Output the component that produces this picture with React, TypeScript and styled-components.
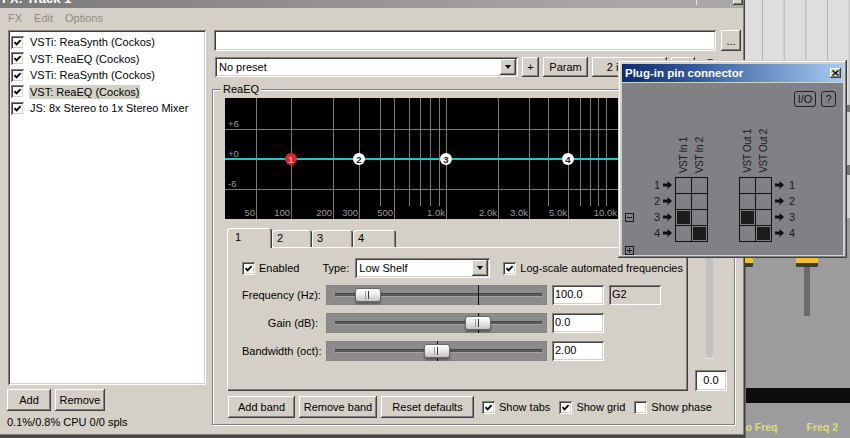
import React from 'react';
import styled, { createGlobalStyle, css } from 'styled-components';

// ── Global ───────────────────────────────────────────────────────────────────

const GlobalStyle = createGlobalStyle`
  html, body { margin: 0; padding: 0; }
  body {
    background: #4a4a4a;
    font-family: "Liberation Sans", Arial, sans-serif;
    font-size: 11px;
    color: #000;
    overflow: hidden;
  }
  * { box-sizing: border-box; }
`;

const raised = css`
  background: #d4d0c8;
  box-shadow: inset -1px -1px #404040, inset 1px 1px #ffffff,
    inset -2px -2px #808080, inset 2px 2px #d4d0c8;
`;

const sunken = css`
  box-shadow: inset 1px 1px #808080, inset -1px -1px #ffffff,
    inset 2px 2px #404040, inset -2px -2px #d4d0c8;
`;

// ── Data ─────────────────────────────────────────────────────────────────────

const fxChain = [
  { name: 'VSTi: ReaSynth (Cockos)' },
  { name: 'VST: ReaEQ (Cockos)' },
  { name: 'VSTi: ReaSynth (Cockos)' },
  { name: 'VST: ReaEQ (Cockos)', selected: true },
  { name: 'JS: 8x Stereo to 1x Stereo Mixer' },
];

const freqLines: { x: number; label?: string }[] = [
  { x: 31, label: '50' },
  { x: 66, label: '100' },
  { x: 108, label: '200' },
  { x: 134, label: '300' },
  { x: 155 },
  { x: 169, label: '500' },
  { x: 184 },
  { x: 195 },
  { x: 205 },
  { x: 214 },
  { x: 221, label: '1.0k' },
  { x: 273, label: '2.0k' },
  { x: 304, label: '3.0k' },
  { x: 323 },
  { x: 343, label: '5.0k' },
  { x: 355 },
  { x: 365 },
  { x: 373 },
  { x: 381 },
  { x: 393, label: '10.0k' },
  { x: 445, label: '20.0k' },
];

const gainLines = [
  { y: 31, label: '+6' },
  { y: 61, label: '+0' },
  { y: 91, label: '-6' },
];

const bandNodes = [
  { x: 66, n: 1, active: true },
  { x: 134, n: 2 },
  { x: 221, n: 3 },
  { x: 343, n: 4 },
];

const tabs = [
  { label: '1', w: 45, active: true },
  { label: '2', w: 40 },
  { label: '3', w: 41 },
  { label: '4', w: 43 },
];

const params = [
  { label: 'Frequency (Hz):', value: '100.0', thumb: 42, tick: 152, note: 'G2' },
  { label: 'Gain (dB):', value: '0.0', thumb: 152, tick: 152 },
  { label: 'Bandwidth (oct):', value: '2.00', thumb: 111, tick: 111 },
];

// which pins are routed: [row][col]
const inPins = [
  [false, false],
  [false, false],
  [true, false],
  [false, true],
];
const outPins = inPins;

// ── Layout ───────────────────────────────────────────────────────────────────

const Desktop = styled.div`
  position: relative;
  width: 850px;
  height: 438px;
  overflow: hidden;
  display: flex;
`;

const FxWindow = styled.div`
  flex: none;
  width: 745px;
  height: 436px;
  background: #d4d0c8;
  display: flex;
  flex-direction: column;
  box-shadow: inset -1px -1px #404040, inset -2px -2px #808080;
`;

const TitleBar = styled.div`
  flex: none;
  height: 20px;
  margin: -12px 2px 0 0;
  display: flex;
  align-items: center;
  padding-left: 2px;
  background: linear-gradient(90deg, #7a7a7a, #a9a9a9 85%);
  color: #fff;
  font-weight: bold;
  font-size: 13px;
`;

const TitleTools = styled.div`
  margin-left: auto;
  display: flex;
  align-items: center;
  gap: 32px;
`;

const TitleBtn = styled.span`
  width: 10px;
  height: 14px;
  ${raised};
`;

const MenuBar = styled.div`
  flex: none;
  height: 20px;
  display: flex;
  align-items: center;
  gap: 12px;
  padding-left: 8px;
  color: #8a8a8a;
`;

const Body = styled.div`
  flex: 1;
  min-height: 0;
  display: flex;
  gap: 6px;
  padding: 2px 4px 0 8px;
`;

const LeftCol = styled.div`
  flex: none;
  width: 198px;
  display: flex;
  flex-direction: column;
`;

const FxList = styled.div`
  height: 355px;
  background: #fff;
  ${sunken};
  padding: 4px 2px 2px 3px;
`;

const FxItem = styled.div`
  height: 16.5px;
  display: flex;
  align-items: center;
  gap: 5px;
`;

const FxName = styled.span<{ $selected?: boolean }>`
  padding: 1px 1px;
  background: ${p => (p.$selected ? '#d4d0c8' : 'transparent')};
  white-space: nowrap;
`;

const ButtonRow = styled.div`
  display: flex;
  align-items: center;
  gap: 4px;
`;

const LeftButtons = styled(ButtonRow)`
  margin: 4px 0 0 -1px;
`;

const Button = styled.button<{ $w: number; $h?: number }>`
  width: ${p => p.$w}px;
  height: ${p => p.$h ?? 22}px;
  flex: none;
  border: none;
  padding: 0;
  font: inherit;
  color: #000;
  white-space: nowrap;
  ${raised};
  display: inline-flex;
  align-items: center;
  justify-content: center;
`;

const Status = styled.div`
  margin: 5px 0 0 -1px;
  white-space: nowrap;
`;

const RightCol = styled.div`
  flex: 1;
  display: flex;
  flex-direction: column;
`;

const FieldRow = styled.div`
  height: 21px;
  display: flex;
  gap: 5px;
  padding-left: 2px;
`;

const TextField = styled.div`
  flex: 1;
  background: #fff;
  ${sunken};
`;

const PresetRow = styled.div`
  margin-top: 6px;
  height: 20px;
  display: flex;
  align-items: center;
  gap: 4px;
  padding-left: 3px;
`;

const Combo = styled.div<{ $w: number }>`
  width: ${p => p.$w}px;
  height: 20px;
  flex: none;
  background: #fff;
  ${sunken};
  padding: 2px;
  display: flex;
  align-items: center;
`;

const ComboText = styled.span`
  padding-left: 2px;
`;

const ComboArrow = styled.span`
  margin-left: auto;
  width: 16px;
  height: 16px;
  ${raised};
  display: flex;
  align-items: center;
  justify-content: center;
  &::after {
    content: '';
    border-left: 3.5px solid transparent;
    border-right: 3.5px solid transparent;
    border-top: 4px solid #000;
  }
`;

const RoundToggle = styled.span`
  width: 16px;
  height: 16px;
  margin-left: 3px;
  border: 1px solid #222;
  border-radius: 50%;
`;

const SquareToggle = styled.span`
  width: 13px;
  height: 13px;
  ${sunken};
  background: #fff;
`;

// ── ReaEQ group ──────────────────────────────────────────────────────────────

const Group = styled.div`
  position: relative;
  margin: 12px 6px 0 0;
  height: 336px;
  border: 1px solid #808080;
  box-shadow: inset 1px 1px #fff, 1px 1px #fff;
  padding: 8px 6px 0 12px;
`;

const GroupLabel = styled.span`
  position: absolute;
  top: -7px;
  left: 8px;
  padding: 0 2px;
  line-height: 13px;
  background: #d4d0c8;
`;

const GraphSvg = styled.svg`
  display: block;
  font-family: "Liberation Sans", Arial, sans-serif;
`;

const BandArea = styled.div`
  margin-top: 9px;
  padding-left: 2px;
  display: flex;
`;

const TabsCol = styled.div`
  flex: none;
  width: 461px;
  display: flex;
  flex-direction: column;
`;

const TabStrip = styled.div`
  height: 19px;
  display: flex;
  align-items: flex-end;
`;

const Tab = styled.div<{ $w: number; $active?: boolean }>`
  position: relative;
  z-index: ${p => (p.$active ? 1 : 0)};
  width: ${p => p.$w}px;
  height: ${p => (p.$active ? 20 : 17)}px;
  margin-bottom: ${p => (p.$active ? -1 : 0)}px;
  padding: ${p => (p.$active ? '3px 0 0 8px' : '2px 0 0 5px')};
  background: #d4d0c8;
  border-radius: 3px 3px 0 0;
  box-shadow: inset 1px 1px #fff, inset -1px 0 #404040, inset -2px 0 #808080;
`;

const TabPanel = styled.div`
  height: 144px;
  background: #d4d0c8;
  box-shadow: inset 1px 1px #fff, inset -1px -1px #404040, inset -2px -2px #808080;
  padding: 11px 0 0 15px;
`;

const BandTop = styled.div`
  height: 20px;
  display: flex;
  align-items: center;
`;

const CheckLabel = styled.label<{ $ml?: number }>`
  display: inline-flex;
  align-items: center;
  gap: 4px;
  margin-left: ${p => p.$ml ?? 0}px;
  white-space: nowrap;
`;

const CheckBox = styled.span`
  flex: none;
  width: 13px;
  height: 13px;
  background: #fff;
  ${sunken};
  display: inline-flex;
  align-items: center;
  justify-content: center;
`;

const TypeLabel = styled.span`
  margin: 0 6px 0 23px;
`;

const ParamGrid = styled.div`
  margin-top: 7px;
  display: grid;
  grid-template-columns: 79px 221px 52px 52px;
  grid-auto-rows: 20px;
  column-gap: 5px;
  row-gap: 8px;
  align-items: center;
`;

const ParamLabel = styled.span`
  text-align: right;
  padding-right: 3px;
  white-space: nowrap;
`;

const Slider = styled.div`
  position: relative;
  height: 20px;
  background: #8c8c8c;
  box-shadow: inset 0 0 0 1px #858585;
`;

const SliderTrack = styled.div`
  position: absolute;
  left: 9px;
  right: 5px;
  top: 8px;
  height: 4px;
  background: #595959;
  border-top: 1px solid #4a4a4a;
  border-bottom: 1px solid #a3a3a3;
`;

const SliderTick = styled.div`
  position: absolute;
  top: 0;
  bottom: 0;
  width: 1px;
  background: #101010;
`;

const SliderThumb = styled.div`
  position: absolute;
  top: 3px;
  width: 26px;
  height: 14px;
  border: 1px solid #6a6a6a;
  border-radius: 3px;
  background: linear-gradient(#ffffff, #eaeaea 45%, #c4c4c4);
  box-shadow: 0 2px 2px rgba(0, 0, 0, 0.35);
  &::after {
    content: '';
    position: absolute;
    left: 12px;
    top: 2px;
    width: 1px;
    height: 8px;
    background: #3c3c3c;
    box-shadow: -3px 0 #9a9a9a;
  }
`;

const ValueBox = styled.div<{ $ro?: boolean; $center?: boolean }>`
  height: 20px;
  line-height: 18px;
  padding-left: 3px;
  background: ${p => (p.$ro ? '#d4d0c8' : '#fff')};
  text-align: ${p => (p.$center ? 'center' : 'left')};
  ${sunken};
`;

const VSliderCol = styled.div`
  flex: none;
  width: 32px;
  margin-left: 7px;
  display: flex;
  flex-direction: column;
  align-items: center;
`;

const VTrack = styled.div`
  width: 7px;
  height: 128px;
  margin: 2px 3px 0 0;
  background: #c2c2c2;
  border-radius: 0 0 3px 3px;
  box-shadow: 0 1px #e8e8e8;
`;

const VValue = styled(ValueBox)`
  width: 32px;
  height: 21px;
  margin-top: 12px;
  padding-left: 0;
  line-height: 20px;
`;

const EqButtons = styled(ButtonRow)`
  margin-top: 5px;
  padding-left: 3px;
`;

const EqChecks = styled.div`
  display: flex;
  gap: 9px;
  margin-left: 4px;
`;

// ── Pin connector ────────────────────────────────────────────────────────────

const PinWindow = styled.div`
  position: absolute;
  left: 618px;
  top: 60px;
  width: 229px;
  height: 198px;
  padding: 4px;
  background: #d4d0c8;
  box-shadow: inset -1px -1px #404040, inset 1px 1px #d4d0c8,
    inset -2px -2px #808080, inset 2px 2px #ffffff;
  display: flex;
  flex-direction: column;
`;

const PinTitle = styled.div`
  flex: none;
  height: 18px;
  display: flex;
  align-items: center;
  padding: 0 2px 0 3px;
  background: linear-gradient(90deg, #0d2a6e, #3a5da0 35%, #a6caf0);
  color: #fff;
  font-weight: bold;
  font-size: 11.5px;
`;

const CloseBtn = styled.span`
  margin-left: auto;
  width: 11px;
  height: 10px;
  ${raised};
  display: flex;
  align-items: center;
  justify-content: center;
`;

const PinBody = styled.div`
  flex: 1;
  margin-top: 1px;
  background: #7f8185;
  display: flex;
  flex-direction: column;
  color: #1a1a1a;
`;

const PinTopRow = styled.div`
  display: flex;
  justify-content: flex-end;
  gap: 5px;
  padding: 8px 7px 0 0;
`;

const PinButton = styled.span<{ $w: number }>`
  width: ${p => p.$w}px;
  height: 16px;
  border: 1px solid #222;
  border-radius: 3px;
  display: flex;
  align-items: center;
  justify-content: center;
  font-size: 11px;
`;

const Matrix = styled.div`
  display: grid;
  grid-template-columns: 12px 41px 33px 31px 33px 1fr;
  grid-template-rows: 70px repeat(4, 16px) 1fr;
`;

const HeaderCell = styled.div<{ $col: number }>`
  grid-column: ${p => p.$col};
  grid-row: 1;
  display: flex;
  align-items: flex-end;
  padding: 0 0 4px 1px;
`;

const VLabel = styled.span`
  width: 16px;
  writing-mode: vertical-rl;
  transform: rotate(180deg);
  line-height: 16px;
  font-size: 10px;
  letter-spacing: -0.3px;
  white-space: nowrap;
`;

const RowLabel = styled.div<{ $row: number; $side: 'in' | 'out' }>`
  grid-column: ${p => (p.$side === 'in' ? 2 : 6)};
  grid-row: ${p => p.$row + 2};
  display: flex;
  align-items: center;
  justify-content: ${p => (p.$side === 'in' ? 'flex-end' : 'flex-start')};
  gap: ${p => (p.$side === 'in' ? 3 : 5)}px;
  padding: ${p => (p.$side === 'in' ? '0 3px 0 0' : '0 0 0 3px')};
  font-size: 11px;
`;

const CellGrid = styled.div<{ $col: number }>`
  grid-column: ${p => p.$col};
  grid-row: 2 / span 4;
  display: grid;
  grid-template-columns: 16px 16px;
  grid-auto-rows: 16px;
  border-left: 1px solid #111;
  border-top: 1px solid #111;
  height: 65px;
`;

const Cell = styled.div<{ $on?: boolean }>`
  border-right: 1px solid #111;
  border-bottom: 1px solid #111;
  padding: 1px;
  background: ${p => (p.$on ? '#1c1c1c' : 'transparent')};
  background-clip: content-box;
`;

const ToggleBox = styled.span<{ $row: number }>`
  grid-column: 1;
  grid-row: ${p => p.$row};
  align-self: ${p => (p.$row === 6 ? 'start' : 'center')};
  margin: ${p => (p.$row === 6 ? '5px 0 0 3px' : '1px 0 0 3px')};
  width: 9px;
  height: 9px;
  border: 1px solid #1a1a1a;
  display: flex;
`;

// ── Background (arrange + mixer) ─────────────────────────────────────────────

const BackPane = styled.div`
  flex: 1;
  min-width: 0;
  overflow: hidden;
  display: flex;
  flex-direction: column;
  background: #9c9c9c;
`;

const Arrange = styled.div`
  flex: none;
  height: 105px;
  background-color: #dedede;
  background-image: linear-gradient(90deg, #b3b3b3 1px, transparent 1px);
  background-size: 21.7px 100%;
  background-position: 17px 0;
`;

const Lane = styled.div<{ $h: number; $dark?: boolean }>`
  flex: none;
  height: ${p => p.$h}px;
  background: ${p => (p.$dark ? '#777777' : '#d6d6d6')};
`;

const Mixer = styled.div`
  flex: 1;
  display: flex;
  flex-direction: column;
  border-left: 1px solid #6a6a6a;
`;

const FaderRow = styled.div`
  flex: none;
  display: flex;
  align-items: flex-start;
  gap: 43px;
  margin-left: -15px;
  padding-top: 40px;
`;

const Fader = styled.div`
  width: 22px;
  display: flex;
  flex-direction: column;
  align-items: center;
`;

const FaderCap = styled.div`
  flex: none;
  width: 22px;
  height: 9px;
  border-radius: 1px;
  background: linear-gradient(#f3c12c 0 5px, #3b3b3b 5px);
`;

const FaderShaft = styled.div`
  flex: none;
  width: 6px;
  height: 49px;
  background: #6b6b6b;
`;

const BlackBar = styled.div`
  flex: none;
  margin-top: 72px;
  height: 15px;
  background: #0d0d0d;
`;

const StripLabels = styled.div`
  display: flex;
  gap: 29px;
  margin-left: -7px;
  padding-top: 18px;
  color: #dcdc7a;
  font-weight: bold;
  font-size: 10.5px;
  white-space: nowrap;
`;

// ── Pieces ───────────────────────────────────────────────────────────────────

const Tick = () => (
  <svg width="9" height="9" viewBox="0 0 9 9">
    <path d="M1.5 4.2 L3.6 6.4 L7.6 2.2" fill="none" stroke="#000" strokeWidth="1.8" />
  </svg>
);

const Check: React.FC<{ on?: boolean }> = ({ on }) => (
  <CheckBox>{on && <Tick />}</CheckBox>
);

const Arrow = () => (
  <svg width="9" height="8" viewBox="0 0 9 8">
    <path d="M0 2.5h4.5V0L9 4 4.5 8V5.5H0z" fill="#111" />
  </svg>
);

const EqGraph = () => (
  <GraphSvg width={502} height={121} viewBox="0 0 502 121">
    <rect width="502" height="121" fill="#000" />
    {gainLines.map(g => (
      <line key={g.y} x1="0" x2="502" y1={g.y + 0.5} y2={g.y + 0.5} stroke="#7a7a7a" />
    ))}
    {freqLines.map(f => (
      <line
        key={f.x}
        x1={f.x + 0.5}
        x2={f.x + 0.5}
        y1="0"
        y2={f.label ? 121 : 108}
        stroke="#7a7a7a"
      />
    ))}
    {gainLines.map(g => (
      <text key={g.label} x="3" y={g.y - 2} fontSize="9.5" fill="#9c9c9c">
        {g.label}
      </text>
    ))}
    {freqLines
      .filter(f => f.label)
      .map(f => (
        <text key={f.label} x={f.x - 1} y="118" fontSize="9.5" fill="#9c9c9c" textAnchor="end">
          {f.label}
        </text>
      ))}
    <line x1="0" x2="502" y1="61" y2="61" stroke="#27c3cd" strokeWidth="2" />
    {bandNodes.map(b => (
      <g key={b.n}>
        <circle cx={b.x} cy="61" r="6" fill={b.active ? '#e4222c' : '#fff'} />
        <text
          x={b.x}
          y="64.5"
          fontSize="9.5"
          fontWeight="bold"
          textAnchor="middle"
          fill={b.active ? '#f3a3a3' : '#1a1a1a'}
        >
          {b.n}
        </text>
      </g>
    ))}
  </GraphSvg>
);

const PinConnector = () => (
  <PinWindow>
    <PinTitle>
      Plug-in pin connector
      <CloseBtn>
        <svg width="7" height="6" viewBox="0 0 7 6">
          <path d="M0.5 0.5 L6.5 5.5 M6.5 0.5 L0.5 5.5" stroke="#000" strokeWidth="1.3" />
        </svg>
      </CloseBtn>
    </PinTitle>
    <PinBody>
      <PinTopRow>
        <PinButton $w={22}>I/O</PinButton>
        <PinButton $w={15}>?</PinButton>
      </PinTopRow>
      <Matrix>
        <HeaderCell $col={3}>
          <VLabel>VST In 1</VLabel>
          <VLabel>VST In 2</VLabel>
        </HeaderCell>
        <HeaderCell $col={5}>
          <VLabel>VST Out 1</VLabel>
          <VLabel>VST Out 2</VLabel>
        </HeaderCell>
        {[0, 1, 2, 3].map(r => (
          <React.Fragment key={r}>
            <RowLabel $row={r} $side="in">
              {r + 1}
              <Arrow />
            </RowLabel>
            <RowLabel $row={r} $side="out">
              <Arrow />
              {r + 1}
            </RowLabel>
          </React.Fragment>
        ))}
        <CellGrid $col={3}>
          {inPins.flat().map((on, i) => (
            <Cell key={i} $on={on} />
          ))}
        </CellGrid>
        <CellGrid $col={5}>
          {outPins.flat().map((on, i) => (
            <Cell key={i} $on={on} />
          ))}
        </CellGrid>
        <ToggleBox $row={4}>
          <svg width="7" height="7" viewBox="0 0 7 7">
            <path d="M1 3.5h5" stroke="#1a1a1a" />
          </svg>
        </ToggleBox>
        <ToggleBox $row={6}>
          <svg width="7" height="7" viewBox="0 0 7 7">
            <path d="M1 3.5h5M3.5 1v5" stroke="#1a1a1a" />
          </svg>
        </ToggleBox>
      </Matrix>
    </PinBody>
  </PinWindow>
);

// ── App ──────────────────────────────────────────────────────────────────────

export default function App() {
  return (
    <Desktop>
      <GlobalStyle />
      <FxWindow>
        <TitleBar>
          FX: Track 1
          <TitleTools>
            <svg width="9" height="14" viewBox="0 0 9 14">
              <path d="M0 6.5h9M4.5 2v12" stroke="#e6e6e6" />
            </svg>
            <TitleBtn />
          </TitleTools>
        </TitleBar>
        <MenuBar>
          <span>FX</span>
          <span>Edit</span>
          <span>Options</span>
        </MenuBar>
        <Body>
          <LeftCol>
            <FxList>
              {fxChain.map((fx, i) => (
                <FxItem key={i}>
                  <Check on />
                  <FxName $selected={fx.selected}>{fx.name}</FxName>
                </FxItem>
              ))}
            </FxList>
            <LeftButtons>
              <Button $w={44}>Add</Button>
              <Button $w={50}>Remove</Button>
            </LeftButtons>
            <Status>0.1%/0.8% CPU 0/0 spls</Status>
          </LeftCol>

          <RightCol>
            <FieldRow>
              <TextField />
              <Button $w={20} $h={21}>...</Button>
            </FieldRow>
            <PresetRow>
              <Combo $w={303}>
                <ComboText>No preset</ComboText>
                <ComboArrow />
              </Combo>
              <Button $w={17} $h={20}>+</Button>
              <Button $w={45} $h={20}>Param</Button>
              <Button $w={75} $h={20}>2 in 2 out</Button>
              <Button $w={24} $h={20}>...</Button>
              <RoundToggle />
              <SquareToggle />
            </PresetRow>

            <Group>
              <GroupLabel>ReaEQ</GroupLabel>
              <EqGraph />
              <BandArea>
                <TabsCol>
                  <TabStrip>
                    {tabs.map(t => (
                      <Tab key={t.label} $w={t.w} $active={t.active}>
                        {t.label}
                      </Tab>
                    ))}
                  </TabStrip>
                  <TabPanel>
                    <BandTop>
                      <CheckLabel>
                        <Check on />
                        Enabled
                      </CheckLabel>
                      <TypeLabel>Type:</TypeLabel>
                      <Combo $w={135}>
                        <ComboText>Low Shelf</ComboText>
                        <ComboArrow />
                      </Combo>
                      <CheckLabel $ml={13}>
                        <Check on />
                        Log-scale automated frequencies
                      </CheckLabel>
                    </BandTop>
                    <ParamGrid>
                      {params.map(p => (
                        <React.Fragment key={p.label}>
                          <ParamLabel>{p.label}</ParamLabel>
                          <Slider>
                            <SliderTrack />
                            <SliderTick style={{ left: p.tick }} />
                            <SliderThumb style={{ left: p.thumb - 13 }} />
                          </Slider>
                          <ValueBox>{p.value}</ValueBox>
                          {p.note ? <ValueBox $ro>{p.note}</ValueBox> : <span />}
                        </React.Fragment>
                      ))}
                    </ParamGrid>
                  </TabPanel>
                </TabsCol>
                <VSliderCol>
                  <VTrack />
                  <VValue $center>0.0</VValue>
                </VSliderCol>
              </BandArea>
              <EqButtons>
                <Button $w={67}>Add band</Button>
                <Button $w={78}>Remove band</Button>
                <Button $w={93}>Reset defaults</Button>
                <EqChecks>
                  <CheckLabel>
                    <Check on />
                    Show tabs
                  </CheckLabel>
                  <CheckLabel>
                    <Check on />
                    Show grid
                  </CheckLabel>
                  <CheckLabel>
                    <Check />
                    Show phase
                  </CheckLabel>
                </EqChecks>
              </EqButtons>
            </Group>
          </RightCol>
        </Body>
      </FxWindow>

      <BackPane>
        <Arrange />
        <Lane $h={7} $dark />
        <Lane $h={53} />
        <Lane $h={10} $dark />
        <Lane $h={43} />
        <Mixer>
          <FaderRow>
            <Fader>
              <FaderCap />
              <FaderShaft />
            </Fader>
            <Fader>
              <FaderCap />
              <FaderShaft />
            </Fader>
          </FaderRow>
          <BlackBar />
          <StripLabels>
            <span>Lo Freq</span>
            <span>Freq 2</span>
          </StripLabels>
        </Mixer>
      </BackPane>

      <PinConnector />
    </Desktop>
  );
}
